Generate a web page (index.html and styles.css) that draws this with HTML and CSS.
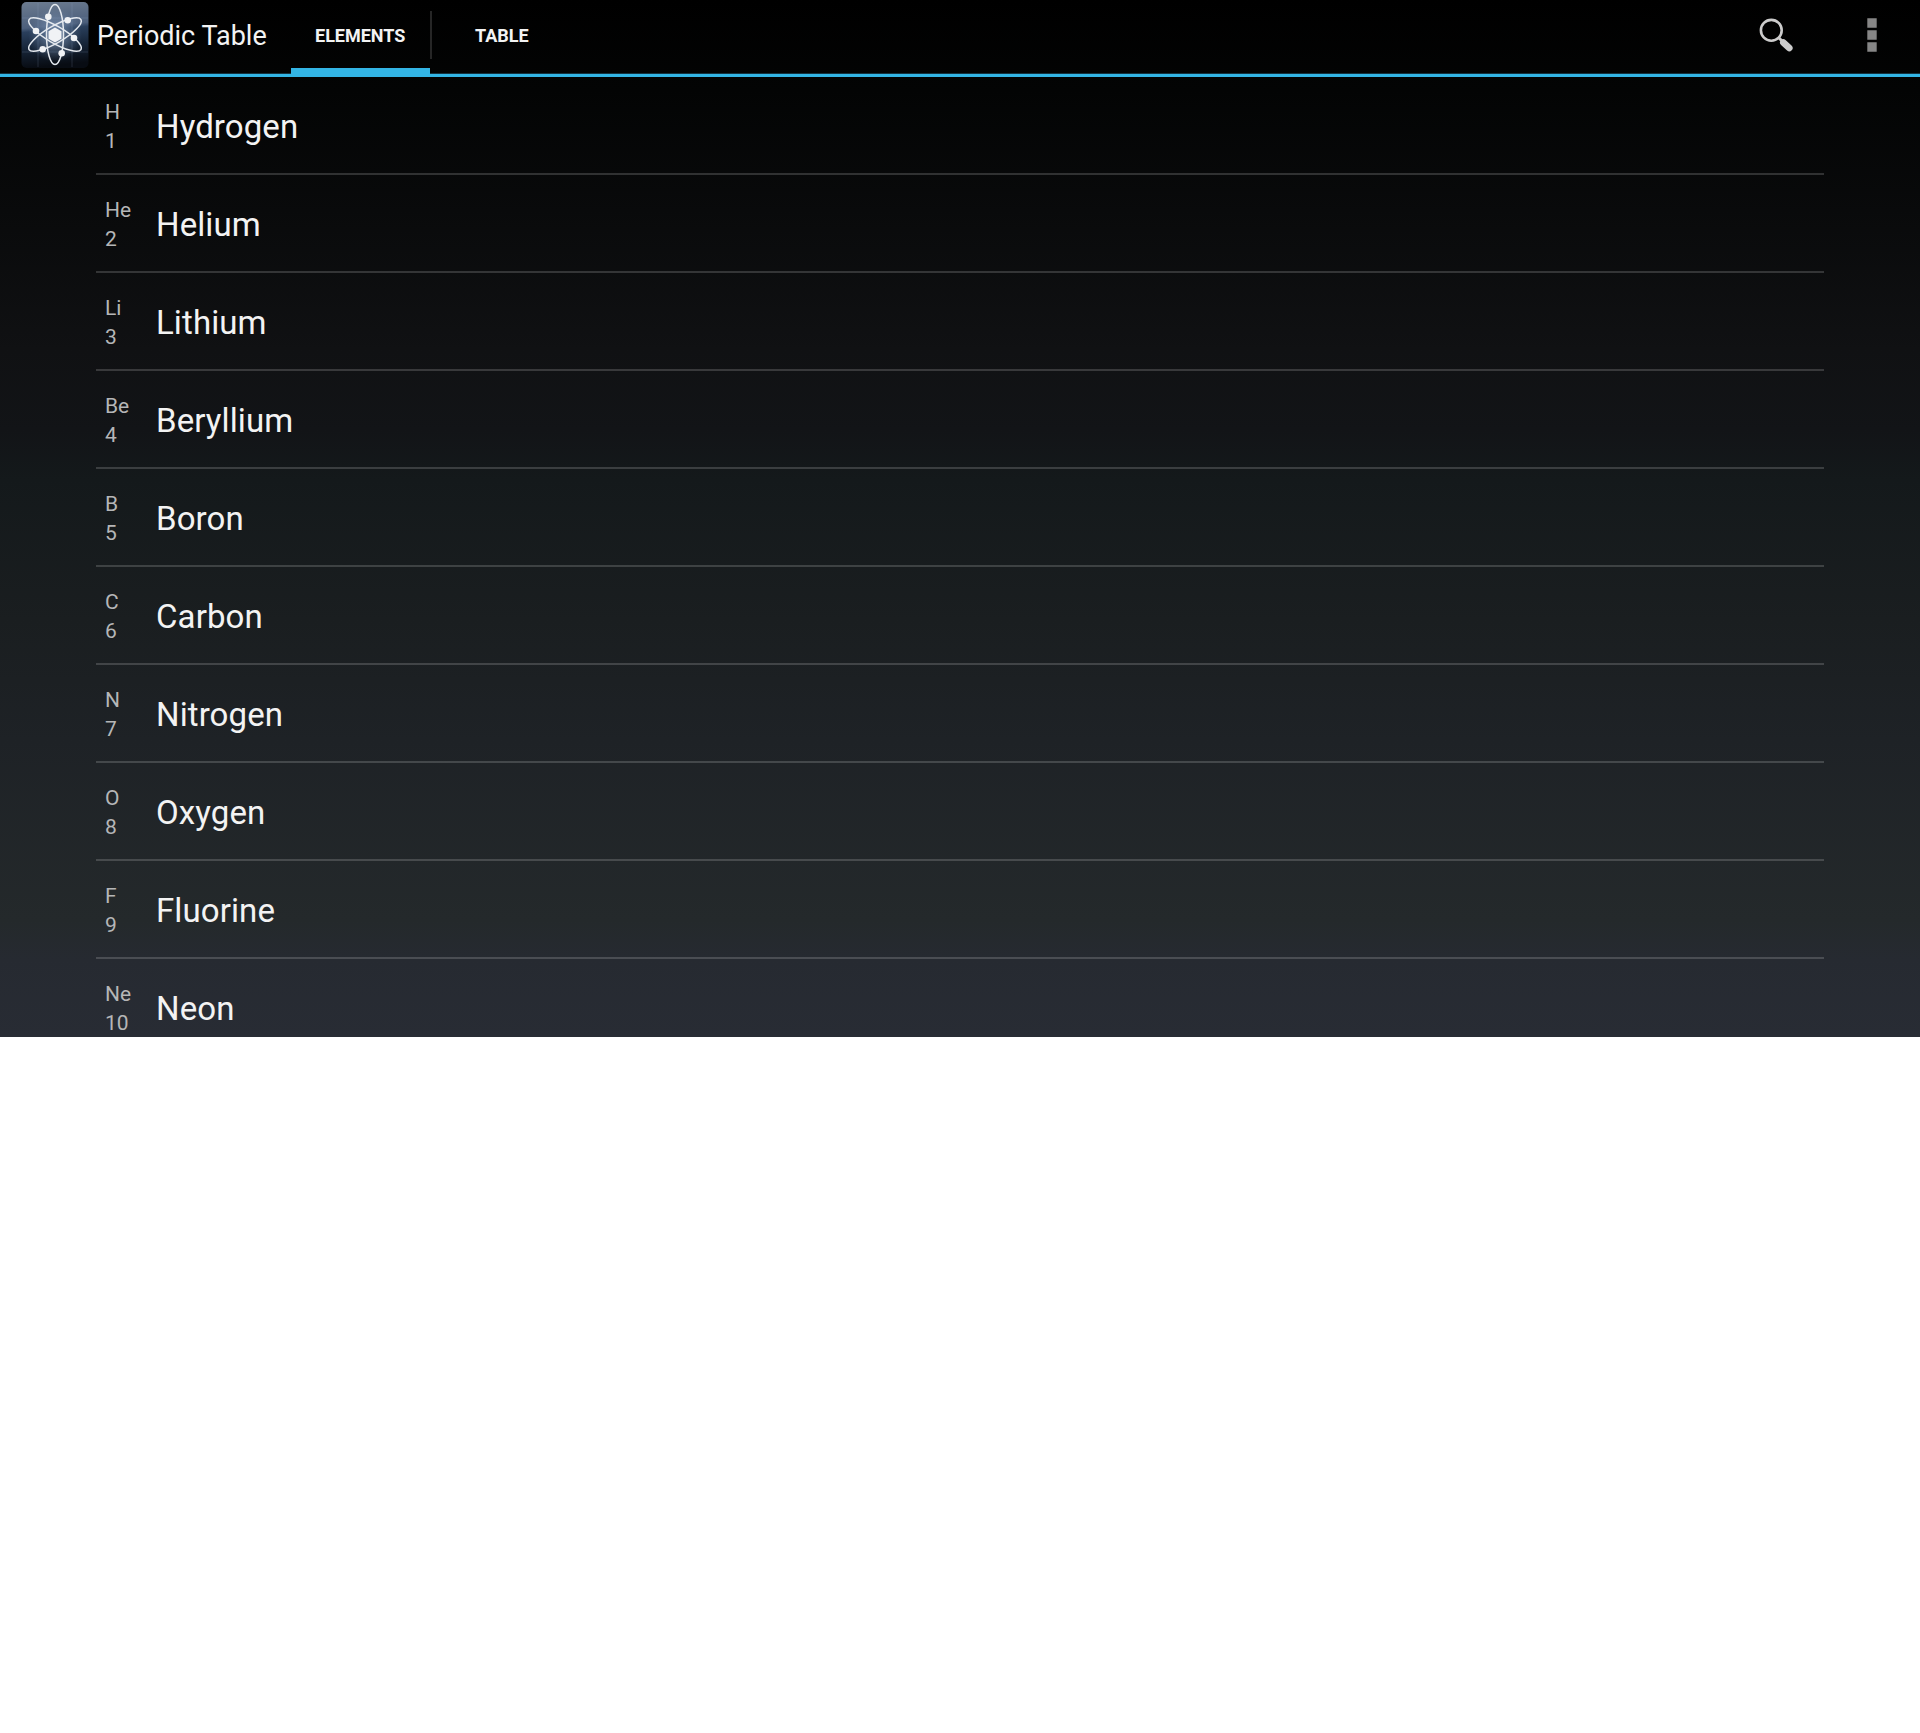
FILE: index.html
```html
<!DOCTYPE html>
<html lang="en">
<head>
<meta charset="utf-8">
<title>Periodic Table</title>
<link rel="stylesheet" href="styles.css">
</head>
<body>
<div class="app">
  <header class="bar">
    <svg class="logo" viewBox="0 0 68 68" aria-hidden="true">
      <defs>
        <linearGradient id="sky" x1="0" y1="0" x2="0.1" y2="1">
          <stop offset="0" stop-color="#6d7c90"/>
          <stop offset="0.4" stop-color="#4c5f7c"/>
          <stop offset="0.46" stop-color="#2a3f5c"/>
          <stop offset="0.7" stop-color="#17263a"/>
          <stop offset="1" stop-color="#080c13"/>
        </linearGradient>
        <radialGradient id="glow"><stop offset="0" stop-color="#9fb7d6" stop-opacity=".7"/><stop offset="1" stop-color="#7892b5" stop-opacity="0"/></radialGradient>
      </defs>
      <rect x=".5" width="67" height="66" rx="5" y="1" fill="url(#sky)"/>
      <path d="M17 2V66M51 2V66M1 17H67M1 51H67" stroke="#9db4d8" stroke-opacity=".18" fill="none"/>
      <circle cx="34" cy="34" r="27" fill="url(#glow)"/>
      <g fill="none" stroke="#e4e9ef" stroke-width="1.5">
        <ellipse cx="34" cy="33.500" rx="8.5" ry="30"/>
        <ellipse cx="34" cy="33.500" rx="8.5" ry="30" transform="rotate(60 34 33.500)"/>
        <ellipse cx="34" cy="33.500" rx="8.5" ry="30" transform="rotate(-60 34 33.500)"/>
      </g>
      <g fill="#f0f2f5">
        <path d="M34 26.500l6.500 3.700v7.600L34 41.500l-6.500-3.700v-7.600z"/>
        <circle cx="27.300" cy="15.700" r="3.300"/><circle cx="46.700" cy="19.300" r="3.300"/>
        <circle cx="15" cy="30" r="3.300"/><circle cx="53" cy="37" r="3.300"/>
        <circle cx="21.700" cy="48.300" r="3.300"/><circle cx="40.700" cy="52.300" r="3.300"/>
      </g>
    </svg>
    <h1 class="title">Periodic Table</h1>
    <nav class="tabs">
      <a class="tab tab-active">ELEMENTS</a>
      <span class="separator"></span>
      <a class="tab">TABLE</a>
    </nav>
    <div class="actions">
      <svg class="search" viewBox="0 0 34 34" aria-label="Search">
        <circle cx="12.300" cy="12.300" r="10.400" fill="none" stroke="#ccc" stroke-width="2.600"/>
        <path d="M19.500 19.500l4 4" stroke="#ccc" stroke-width="3"/>
        <path d="M24.300 24.500l6 5.500" stroke="#ccc" stroke-width="6.600" stroke-linecap="round"/>
      </svg>
      <svg class="more" viewBox="0 0 10 34" aria-label="More options"><path d="M.3.3h9.400v9.400H.3zM.3 12.300h9.400v9.400H.3zM.3 24.300h9.400v9.400H.3z" fill="#868686"/></svg>
    </div>
  </header>
  <ul class="list">
    <li class="row"><div class="key">H<br>1</div><div class="name">Hydrogen</div></li>
    <li class="row"><div class="key">He<br>2</div><div class="name">Helium</div></li>
    <li class="row"><div class="key">Li<br>3</div><div class="name">Lithium</div></li>
    <li class="row"><div class="key">Be<br>4</div><div class="name">Beryllium</div></li>
    <li class="row"><div class="key">B<br>5</div><div class="name">Boron</div></li>
    <li class="row"><div class="key">C<br>6</div><div class="name">Carbon</div></li>
    <li class="row"><div class="key">N<br>7</div><div class="name">Nitrogen</div></li>
    <li class="row"><div class="key">O<br>8</div><div class="name">Oxygen</div></li>
    <li class="row"><div class="key">F<br>9</div><div class="name">Fluorine</div></li>
    <li class="row"><div class="key">Ne<br>10</div><div class="name">Neon</div></li>
  </ul>
</div>
</body>
</html>
```
FILE: styles.css
```css
* { box-sizing: border-box; }
body { margin: 0; background: #fff; font-family: Roboto, sans-serif; }
.app {
  display: flex;
  flex-direction: column;
  height: 1037px;
  overflow: hidden;
  color: #f3f3f3;
  background: linear-gradient(#000 0, #030404 90px, #101113 350px, #121417 430px, #14191b 480px, #1a1e20 620px, #1e2226 740px, #24292b 920px, #262a31 960px, #282c34 1037px);
}
.bar {
  display: flex;
  flex: none;
  height: 77px;
  padding-left: 21px;
  border-bottom: 3px solid #33b5e5;
  box-shadow: inset 0 -1px #14333f;
}
.logo { width: 68px; height: 68px; margin-top: 1px; }
.title { width: 202px; margin: 0; padding-left: 8px; font-size: 27px; font-weight: 400; line-height: 73px; white-space: nowrap; }
.tabs { display: flex; height: 77px; }
.tab { height: 77px; padding: 0 24px; font-size: 18px; font-weight: 700; line-height: 71px; }
.tab-active { width: 139px; border-bottom: 9px solid #33b5e5; }
.separator { width: 2px; height: 48px; margin: 11px 19px 0 0; background: #262626; }
.actions { display: flex; gap: 74px; margin: 18px 43px 0 auto; }
.search { width: 34px; height: 34px; }
.more { width: 10px; height: 34px; }
.list { margin: 0 96px; padding: 0; list-style: none; }
.row { display: flex; height: 98px; border-bottom: 2px solid rgba(255, 255, 255, .17); }
.key { width: 60px; padding: 21px 0 0 9px; font-size: 21px; line-height: 29px; color: #b5b6b7; }
.name { font-size: 33px; line-height: 99px; letter-spacing: .1px; }
```
